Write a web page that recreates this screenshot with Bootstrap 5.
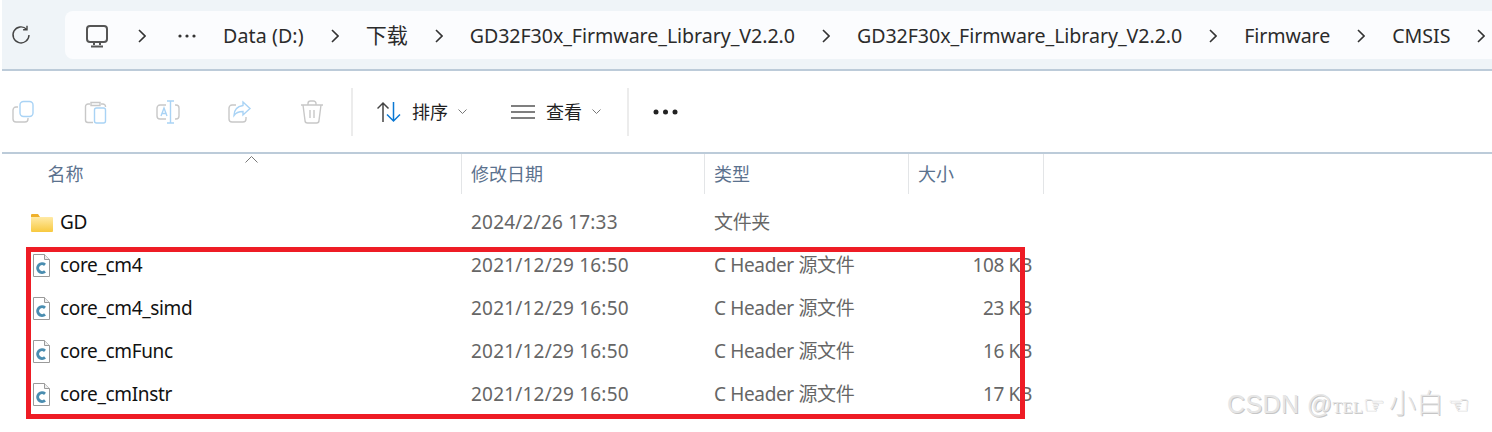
<!DOCTYPE html>
<html lang="zh-CN">
<head>
  <meta charset="UTF-8" />
  <title>Explorer</title>
  <link href="https://cdn.jsdelivr.net/npm/bootstrap@5.3.3/dist/css/bootstrap.min.css" rel="stylesheet" />
  <style>
    body { background: #fff; width: 1492px; height: 432px; overflow: hidden; font-family: "Noto Sans", "Noto Sans CJK SC", sans-serif; color: #1c1c1c; position: relative; }
    svg { display: block; flex: none; }
    .addr-band { margin-left: 2px; height: 71px; background: #eff4f8; border-bottom: 2px solid #bccbd9; padding: 11px 0 10px 0; overflow: hidden; }
    .refresh-slot { width: 63px; padding-left: 9px; flex: none; }
    .addr-pill { flex: 1; background: #fbfcfe; border-radius: 8px 0 0 8px; height: 48px; padding: 2px 0 0 20px; gap: 27px; font-size: 19.6px; white-space: nowrap; color: #2b2b2b; }
    .pc-gap { margin-right: 2px; }
    .dots-gap { margin-right: 5px; }
    .crumb-data { letter-spacing: .1px; }
    .crumb-cjk { font-size: 21px; }
    .crumb-lib { letter-spacing: -.05px; }
    .crumb-fw { letter-spacing: -.1px; }
    .tool-strip { margin-left: 2px; height: 83px; border-bottom: 2px solid #bccbd9; padding-left: 10px; }
    .tool-btn { width: 72px; flex: none; }
    .tool-sep { width: 2px; height: 48px; background: #ececec; flex: none; }
    .sep-first { margin-left: -21px; }
    .sep-second { margin-left: 26px; }
    .menu-txt { font-size: 18px; color: #1f1f1f; padding-top: 2px; margin-left: 11px; }
    .caret-mark { margin-left: 10px; }
    .view-menu { margin-left: 44px; }
    .more-dots { margin-left: 24px; }
    .head-row { height: 40px; position: relative; font-size: 18px; color: #5b728e; }
    .cell-name { width: 460px; margin-left: 2px; flex: none; }
    .cell-date { width: 243px; flex: none; padding-left: 9px; }
    .cell-type { width: 204px; flex: none; padding-left: 9px; }
    .cell-size { width: 135px; flex: none; padding-left: 9px; }
    .head-row > div { height: 40px; border-right: 1px solid #e3e5e7; line-height: 41px; }
    .head-row .cell-name { padding-left: 45.5px; }
    .sort-mark { position: absolute; left: 245px; top: 2px; }
    .file-list { padding-top: 7px; }
    .file-row { height: 43px; line-height: 43px; font-size: 19px; letter-spacing: -.35px; color: #666; }
    .file-row .cell-name { padding-left: 29px; color: #111; }
    .file-row .cell-date { letter-spacing: .2px; }
    .file-row .cell-size { width: 123px; text-align: right; white-space: nowrap; }
    .doc-icon { margin-left: 2px; }
    .name-txt { margin-left: 10px; }
    .folder-txt { margin-left: 7px; }
    .red-frame { position: absolute; left: 26px; top: 247px; width: 999px; height: 172px; border: 5px solid #ee1c25; }
    .wm-text { position: absolute; left: 1227px; top: 384px; font-family: "Liberation Sans", "Noto Sans CJK SC", sans-serif; font-size: 25px; line-height: 36px; color: #e6e6e6; text-shadow: 1px 1px 0 #c6c6c6; white-space: nowrap; letter-spacing: 0.4px; }
    .wm-tel { font-family: "Liberation Serif", serif; font-size: 16px; }
    .wm-hand { font-family: "DejaVu Sans", sans-serif; font-size: 24px; }
    .wm-cjk { font-family: "Noto Sans CJK SC", sans-serif; font-weight: 300; font-size: 27px; margin: 0 4px; }
  </style>
</head>
<body>
  <!-- address bar -->
  <div class="addr-band d-flex">
    <div class="refresh-slot d-flex align-items-center">
      <svg width="20" height="20" viewBox="0 0 20 20" fill="none" stroke="#444" stroke-width="1.4"><path d="M15.6 4.2A8 8 0 1 0 18 10"/><path d="M16 .8v3.9h-3.9"/></svg>
    </div>
    <div class="addr-pill d-flex align-items-center">
      <svg class="pc-gap" width="24" height="24" viewBox="0 0 24 24" fill="none" stroke="#555" stroke-width="2"><rect x="2" y="2" width="20" height="16" rx="3"/><path d="M9 19v2M15 19v2M6 22.5h12"/></svg>
      <svg class="dots-gap" width="8" height="14" viewBox="0 0 8 14" fill="none" stroke="#333" stroke-width="1.6"><path d="M1 1l6 6-6 6"/></svg>
      <svg width="18" height="4" viewBox="0 0 18 4" fill="#333"><circle cx="2" cy="2" r="1.6"/><circle cx="9" cy="2" r="1.6"/><circle cx="16" cy="2" r="1.6"/></svg>
      <span class="crumb-data">Data (D:)</span>
      <svg width="8" height="14" viewBox="0 0 8 14" fill="none" stroke="#333" stroke-width="1.6"><path d="M1 1l6 6-6 6"/></svg>
      <span class="crumb-cjk">下载</span>
      <svg width="8" height="14" viewBox="0 0 8 14" fill="none" stroke="#333" stroke-width="1.6"><path d="M1 1l6 6-6 6"/></svg>
      <span class="crumb-lib">GD32F30x_Firmware_Library_V2.2.0</span>
      <svg width="8" height="14" viewBox="0 0 8 14" fill="none" stroke="#333" stroke-width="1.6"><path d="M1 1l6 6-6 6"/></svg>
      <span class="crumb-lib">GD32F30x_Firmware_Library_V2.2.0</span>
      <svg width="8" height="14" viewBox="0 0 8 14" fill="none" stroke="#333" stroke-width="1.6"><path d="M1 1l6 6-6 6"/></svg>
      <span class="crumb-fw">Firmware</span>
      <svg width="8" height="14" viewBox="0 0 8 14" fill="none" stroke="#333" stroke-width="1.6"><path d="M1 1l6 6-6 6"/></svg>
      <span>CMSIS</span>
      <svg width="8" height="14" viewBox="0 0 8 14" fill="none" stroke="#333" stroke-width="1.6"><path d="M1 1l6 6-6 6"/></svg>
    </div>
  </div>

  <!-- command bar -->
  <div class="tool-strip d-flex align-items-center">
    <div class="tool-btn"><svg width="24" height="24" viewBox="0 0 24 24" fill="none" stroke-width="1.4"><path d="M6 7H4a3 3 0 0 0-3 3v9a3 3 0 0 0 3 3h9a3 3 0 0 0 3-3v-1" stroke="#c8c8c8"/><rect x="8" y="1.5" width="13" height="15" rx="3.5" stroke="#a9d3f5"/></svg></div>
    <div class="tool-btn"><svg width="24" height="24" viewBox="0 0 24 24" fill="none" stroke-width="1.4"><path d="M6 4H4a2.5 2.5 0 0 0-2.500 2.500V20A2.500 2.500 0 0 0 4 22.500h5M17 4h2a2.500 2.500 0 0 1 2.500 2.500V7M7 2.500h9v3H7z" stroke="#c8c8c8"/><rect x="10.500" y="8" width="11" height="15" rx="2" stroke="#a9d3f5"/></svg></div>
    <div class="tool-btn"><svg width="24" height="24" viewBox="0 0 24 24" fill="none" stroke-width="1.4"><path d="M10 5H4a3 3 0 0 0-3 3v8a3 3 0 0 0 3 3h6M19 5h1a3 3 0 0 1 3 3v8a3 3 0 0 1-3 3h-1" stroke="#c8c8c8"/><path d="M11 1h7M11 23h7M14.500 1v22M5 16l3-8 3 8M6 13.500h4" stroke="#a9d3f5"/></svg></div>
    <div class="tool-btn"><svg width="24" height="24" viewBox="0 0 24 24" fill="none" stroke-width="1.4"><path d="M8 5H4a3 3 0 0 0-3 3v11a3 3 0 0 0 3 3h11a3 3 0 0 0 3-3v-2" stroke="#c8c8c8"/><path d="M15 2l7 6.500-7 6.500v-3.500c-4 0-7 1-9 4 0-5 3-9 9-10z" stroke="#a9d3f5"/></svg></div>
    <div class="tool-btn"><svg width="24" height="24" viewBox="0 0 24 24" fill="none" stroke="#c8c8c8" stroke-width="1.4"><path d="M1 5h22M8 5V3.500A2.500 2.500 0 0 1 10.500 1h3A2.500 2.500 0 0 1 16 3.500V5M3 5l2 15.500A2.500 2.500 0 0 0 7.500 23h9a2.500 2.500 0 0 0 2.500-2.500L21 5M10 10v8M14 10v8"/></svg></div>
    <div class="tool-sep sep-first"></div>
    <div class="d-flex align-items-center ms-4">
      <svg width="24" height="24" viewBox="0 0 24 24" fill="none" stroke-width="1.5"><path d="M6 22V3M.5 8.500L6 3l5.500 5.500" stroke="#444"/><path d="M16.500 2v19M10 14.500l6.500 6.500 6.500-6.500" stroke="#0a78d4"/></svg>
      <span class="menu-txt">排序</span>
      <svg class="caret-mark" width="9" height="5" viewBox="0 0 9 5" fill="none" stroke="#777"><path d="M.5.500l4 4 4-4"/></svg>
    </div>
    <div class="d-flex align-items-center view-menu">
      <svg width="24" height="16" viewBox="0 0 24 16" fill="none" stroke="#555" stroke-width="1.300"><path d="M0 2h24M0 8h24M0 14h24"/></svg>
      <span class="menu-txt">查看</span>
      <svg class="caret-mark" width="9" height="5" viewBox="0 0 9 5" fill="none" stroke="#777"><path d="M.5.500l4 4 4-4"/></svg>
    </div>
    <div class="tool-sep sep-second"></div>
    <svg class="more-dots" width="25" height="6" viewBox="0 0 25 6" fill="#222"><circle cx="3" cy="3" r="2.500"/><circle cx="12.500" cy="3" r="2.500"/><circle cx="22" cy="3" r="2.500"/></svg>
  </div>

  <!-- column headers -->
  <div class="head-row d-flex">
    <svg class="sort-mark" width="13" height="7" viewBox="0 0 13 7" fill="none" stroke="#777"><path d="M.5 6.500l6-6 6 6"/></svg>
    <div class="cell-name">名称</div>
    <div class="cell-date">修改日期</div>
    <div class="cell-type">类型</div>
    <div class="cell-size">大小</div>
  </div>

  <!-- files -->
  <div class="file-list" id="files">
    <div class="file-row d-flex">
      <div class="cell-name d-flex align-items-center">
        <svg width="22" height="18" viewBox="0 0 22 18"><defs><linearGradient id="fold" x1="0" y1="0" x2="0" y2="1"><stop offset="0" stop-color="#ffeaa6"/><stop offset="1" stop-color="#f8c93f"/></linearGradient></defs><path d="M0 1a1 1 0 0 1 1-1h6l2 3H0z" fill="#efb02b"/><path d="M0 3h21a1 1 0 0 1 1 1v13a1 1 0 0 1-1 1H1a1 1 0 0 1-1-1z" fill="url(#fold)"/></svg>
        <span class="folder-txt">GD</span>
      </div>
      <div class="cell-date">2024/2/26 17:33</div>
      <div class="cell-type">文件夹</div>
    </div>
  </div>

  <div class="red-frame"></div>
  <div class="wm-text">CSDN @<span class="wm-tel">TEL</span><span class="wm-hand">☞</span><span class="wm-cjk">小白</span><span class="wm-hand">☜</span></div>

  <script src="https://cdn.jsdelivr.net/npm/bootstrap@5.3.3/dist/js/bootstrap.bundle.min.js"></script>
  <script>
    // header files all share the same date and type
    const files = [["core_cm4", "108 KB"], ["core_cm4_simd", "23 KB"], ["core_cmFunc", "16 KB"], ["core_cmInstr", "17 KB"]];
    const icon = '<svg class="doc-icon" width="17" height="23" viewBox="0 0 17 23" fill="none"><path d="M.5.500h11l5 5v17H.5z" fill="#fff" stroke="#9a9a9a"/><path d="M11.500.500v5h5" fill="#eee" stroke="#9a9a9a"/><path d="M12 10.800a4.400 4.400 0 1 0 0 6.600" stroke="#4a8db0" stroke-width="3"/></svg>';
    document.getElementById("files").insertAdjacentHTML("beforeend", files.map(f => `
      <div class="file-row d-flex">
        <div class="cell-name d-flex align-items-center">${icon}<span class="name-txt">${f[0]}</span></div>
        <div class="cell-date">2021/12/29 16:50</div>
        <div class="cell-type">C Header 源文件</div>
        <div class="cell-size">${f[1]}</div>
      </div>`).join(""));
  </script>
</body>
</html>
